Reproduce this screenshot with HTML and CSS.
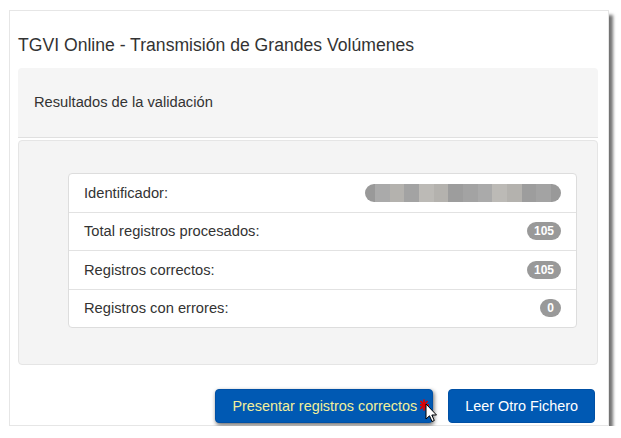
FILE: index.html
```html
<!DOCTYPE html>
<html lang="es">
<head>
    <meta charset="UTF-8">
    <title>TGVI Online</title>
    <link rel="stylesheet" href="styles.css">
</head>
<body>
    <div class="card">
        <h1>TGVI Online - Transmisión de Grandes Volúmenes</h1>

        <!-- Cabecera del resultado -->
        <div class="panel-heading">Resultados de la validación</div>

        <!-- Resumen de la validación -->
        <div class="panel-body">
            <ul class="list-group">
                <li class="list-item">
                    <span>Identificador:</span>
                    <span class="badge badge-id">
                        <i class="px p1"></i><i class="px p2"></i><i class="px p3"></i><i class="px p4"></i><i class="px p2"></i><i class="px p5"></i><i class="px p3"></i><i class="px p1"></i><i class="px p4"></i><i class="px p2"></i><i class="px p5"></i><i class="px p3"></i>
                    </span>
                </li>
                <li class="list-item">
                    <span>Total registros procesados:</span>
                    <span class="badge">105</span>
                </li>
                <li class="list-item">
                    <span>Registros correctos:</span>
                    <span class="badge">105</span>
                </li>
                <li class="list-item">
                    <span>Registros con errores:</span>
                    <span class="badge">0</span>
                </li>
            </ul>
        </div>

        <div class="actions">
            <button class="btn btn-hover">Presentar registros correctos<svg class="cursor" width="22" height="26" viewBox="0 0 22 26">
                    <g stroke="#e00000" stroke-width="1.8">
                        <line x1="4" y1="1.5" x2="4" y2="12.5"/>
                        <line x1="-1" y1="7" x2="9" y2="7"/>
                        <line x1="0.5" y1="3" x2="7.5" y2="11"/>
                        <line x1="7.5" y1="3" x2="0.5" y2="11"/>
                    </g>
                    <path d="M6 6 L6 21 L9.5 17.8 L12 23.5 L14.3 22.5 L11.8 17 L16.5 17 Z" fill="#fff" stroke="#000" stroke-width="1"/>
                </svg></button>
            <button class="btn">Leer Otro Fichero</button>
        </div>
    </div>
</body>
</html>
```

FILE: styles.css
```css
body {
    margin: 0;
    background-color: #fff;
    font-family: "Liberation Sans", Arial, sans-serif;
    color: #333;
}
.card {
    box-sizing: border-box;
    width: 600px;
    height: 416px;
    margin: 10px 0 0 9px;
    padding: 24px 10px 0 8px;
    background-color: #fff;
    border: 1px solid #e6e6e6;
    box-shadow: 4px 5px 3px rgba(0,0,0,0.55);
}
h1 {
    margin: 0 0 13px;
    font-size: 17.6px;
    font-weight: normal;
    line-height: 20px;
    color: #333;
}
.panel-heading {
    height: 70px;
    box-sizing: border-box;
    padding: 24px 15px 0 16px;
    font-size: 14.7px;
    line-height: 20px;
    background-color: #f5f5f5;
    border-bottom: 1px solid #e0e0e0;
    border-radius: 4px 4px 0 0;
}
.panel-body {
    box-sizing: border-box;
    height: 225px;
    margin-top: 2px;
    padding: 32px 20px 0 49px;
    background-color: #f4f4f4;
    border: 1px solid #e5e5e5;
    border-radius: 4px;
}
.list-group {
    margin: 0;
    padding: 0;
    list-style: none;
    background-color: #fff;
    border: 1px solid #ddd;
    border-radius: 4px;
}
.list-item {
    display: flex;
    justify-content: space-between;
    align-items: center;
    height: 37.5px;
    padding: 0 15px;
    font-size: 14.7px;
    border-top: 1px solid #e2e2e2;
}
.list-item:first-child {
    border-top: none;
}
.badge {
    display: inline-block;
    min-width: 20px;
    padding: 0 7px;
    box-sizing: border-box;
    height: 18px;
    line-height: 18px;
    font-size: 12px;
    font-weight: bold;
    text-align: center;
    color: #fff;
    background-color: #999;
    border-radius: 10px;
}
.badge-id {
    display: flex;
    width: 196px;
    padding: 0 10px;
    overflow: hidden;
}
.px {
    flex: 1;
    height: 18px;
}
.p1 { background-color: #aaa; }
.p2 { background-color: #b4b2ae; }
.p3 { background-color: #a3a3a3; }
.p4 { background-color: #bcbab6; }
.p5 { background-color: #9d9d9d; }
.actions {
    display: flex;
    justify-content: flex-end;
    gap: 15px;
    margin-top: 24px;
    padding-right: 3px;
}
.btn {
    position: relative;
    height: 34px;
    padding: 0 16px;
    font-family: "Liberation Sans", Arial, sans-serif;
    font-size: 14.4px;
    color: #fff;
    background-color: #0059b3;
    border: 1px solid #0050a5;
    border-radius: 4px;
    cursor: pointer;
}
.btn-hover {
    padding-right: 15px;
    color: #f2ef9a;
    box-shadow: 1px 2px 4px rgba(0,0,0,0.6);
}
.cursor {
    position: absolute;
    left: 204px;
    top: 8px;
}
```
